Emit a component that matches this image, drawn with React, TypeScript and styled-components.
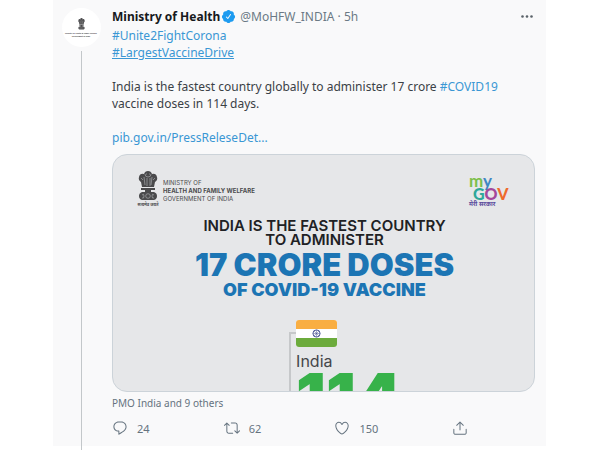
import React from "react";
import styled, { createGlobalStyle } from "styled-components";

const GlobalStyle = createGlobalStyle`
  * { box-sizing: border-box; }
  body {
    margin: 0;
    background: #fff;
    color: #3b4146;
    font: 12px/17px "Noto Sans", "Open Sans", sans-serif;
  }
`;

const Tweet = styled.article`
  display: grid;
  grid-template-columns: 56px minmax(0, 1fr);
  column-gap: 3px;
  margin: 0 54px 4px 53px;
  padding: 8px 11px 0 0;
  background: #f9f9fa;
`;

const Thread = styled.div`
  display: flex;
  flex-direction: column;
  align-items: center;
  margin-bottom: -4px;
  gap: 4px;
`;

const Avatar = styled.a`
  display: flex;
  flex-direction: column;
  align-items: center;
  justify-content: center;
  width: 39px;
  height: 39px;
  border-radius: 50%;
  background: #fff;
  overflow: hidden;
  text-decoration: none;
`;

const AvatarCaption = styled.span`
  margin-top: 2px;
  color: #333;
  font: 700 2px/3px Lato, sans-serif;
  text-align: center;
  white-space: nowrap;
`;

const ThreadLine = styled.div`
  flex: 1;
  width: 1px;
  background: #c3c7ca;
`;

const Header = styled.header`
  display: flex;
  align-items: center;
  height: 17px;
  margin-bottom: 2px;
`;

const Name = styled.a`
  color: #17191c;
  font-weight: 700;
  text-decoration: none;
`;

const Badge = styled.svg`
  width: 15px;
  height: 15px;
  margin: 0 4px 0 1px;
  fill: #1d9bf0;
`;

const Meta = styled.span`
  color: #6b7985;
  white-space: nowrap;
`;

const MoreButton = styled.button`
  display: flex;
  margin-left: auto;
  padding: 0;
  border: 0;
  background: none;
  color: #596168;
`;

const Body = styled.p`
  margin: 0 0 8px;
`;

const Link = styled.a<{ $underlined?: boolean }>`
  color: #3a97d4;
  text-decoration: ${(p) => (p.$underlined ? "underline" : "none")};
`;

const Poster = styled.section`
  aspect-ratio: 16 / 9;
  overflow: hidden;
  padding: 16px 26px 0 24px;
  border: 1px solid #ccd3d9;
  border-radius: 15px;
  background: #e6e7e9;
  color: #202124;
  font-family: Inter, "Liberation Sans", sans-serif;
`;

const PosterTop = styled.div`
  display: flex;
  justify-content: space-between;
  height: 48px;
`;

const Ministry = styled.div`
  display: flex;
  gap: 4px;
  color: #4b4b4d;
  font-size: 6px;
  line-height: 8px;
`;

const MinistryText = styled.div`
  padding-top: 8px;
`;

const EmblemMark = styled.div`
  display: flex;
  flex-direction: column;
  align-items: center;
  width: 22px;
`;

const Motto = styled.span<{ $color: string; $size: number }>`
  color: ${(p) => p.$color};
  font: 700 ${(p) => p.$size}px/8px "Noto Sans Devanagari", "Noto Sans", sans-serif;
  white-space: nowrap;
`;

const Logo = styled.div`
  display: flex;
  flex-direction: column;
  padding-top: 4px;
  width: 39px;
  font-family: Lato, sans-serif;
  font-weight: 700;
`;

const LogoTop = styled.span`
  font-size: 17px;
  line-height: 12px;
`;

const LogoBottom = styled.span`
  padding-left: 4px;
  font-size: 16px;
  font-weight: 900;
  line-height: 14px;
`;

const Tint = styled.span<{ $color: string }>`
  color: ${(p) => p.$color};
`;

const Headline = styled.div`
  padding-left: 4px;
  text-align: center;
`;

const Lead = styled.div`
  font-size: 15px;
  font-weight: 600;
  line-height: 14px;
`;

const Big = styled.div`
  margin-top: 2px;
  color: #1c75b4;
  font-size: 31px;
  font-weight: 900;
  line-height: 31px;
`;

const Sub = styled.div`
  color: #1c75b4;
  font-size: 18px;
  font-weight: 900;
  line-height: 20px;
`;

const Stat = styled.div`
  display: grid;
  grid-template-columns: 7px max-content;
  margin: 20px 0 0 41%;
`;

const Bracket = styled.div`
  margin-top: 12px;
  border: solid #c6c8ca;
  border-width: 2px 0 0 2px;
`;

const Flag = styled.svg`
  display: block;
  width: 41px;
  height: 27px;
`;

const Country = styled.div`
  padding-top: 5px;
  font-size: 16px;
  line-height: 18px;
  color: #45464a;
`;

const Days = styled.div`
  height: 40px;
  color: #37b24a;
  font-size: 66px;
  font-weight: 900;
  line-height: 54px;
`;

const Tagged = styled.a`
  display: block;
  margin-top: 3px;
  color: #65737f;
  font-size: 10px;
  line-height: 16px;
  text-decoration: none;
`;

const Actions = styled.footer`
  display: grid;
  grid-template-columns: 112fr 111fr 118fr 83fr;
  padding: 9px 0;
`;

const Action = styled.button`
  display: flex;
  align-items: center;
  justify-self: start;
  gap: 9px;
  padding: 0;
  border: 0;
  background: none;
  color: #65737f;
  font: 11px/17px "Noto Sans", sans-serif;
`;

const Icon = styled.svg`
  width: 16px;
  height: 16px;
  fill: currentColor;
`;

const icons = {
  reply:
    "M14.046 2.242l-4.148-.01h-.002c-4.374 0-7.8 3.427-7.8 7.802 0 4.098 3.186 7.206 7.465 7.37v3.828c0 .108.044.286.12.403.142.225.384.347.632.347.138 0 .277-.038.402-.118.264-.168 6.473-4.14 8.088-5.506 1.902-1.61 3.04-3.97 3.043-6.312v-.017c-.006-4.367-3.43-7.787-7.8-7.788zm3.787 12.972c-1.134.96-4.862 3.405-6.772 4.643V16.67c0-.414-.335-.75-.75-.75h-.396c-3.66 0-6.318-2.476-6.318-5.886 0-3.534 2.768-6.302 6.3-6.302l4.147.01h.002c3.532 0 6.3 2.766 6.302 6.296-.003 1.91-.942 3.844-2.514 5.176z",
  retweet:
    "M23.77 15.67c-.292-.293-.767-.293-1.06 0l-2.22 2.22V7.65c0-2.068-1.683-3.75-3.75-3.75h-5.85c-.414 0-.75.336-.75.75s.336.75.75.75h5.85c1.24 0 2.25 1.01 2.25 2.25v10.24l-2.22-2.22c-.293-.293-.768-.293-1.06 0s-.294.768 0 1.06l3.5 3.5c.145.147.337.22.53.22s.383-.072.53-.22l3.5-3.5c.294-.292.294-.767 0-1.06zm-10.66 3.28H7.26c-1.24 0-2.25-1.01-2.25-2.25V6.46l2.22 2.22c.148.147.34.22.532.22s.384-.073.53-.22c.293-.293.293-.768 0-1.06l-3.5-3.5c-.293-.294-.768-.294-1.06 0l-3.5 3.5c-.294.292-.294.767 0 1.06s.767.293 1.06 0l2.22-2.22V16.7c0 2.068 1.683 3.75 3.75 3.75h5.85c.414 0 .75-.336.75-.75s-.337-.75-.75-.75z",
  like: "M12 21.638h-.014C9.403 21.59 1.95 14.856 1.95 8.478c0-3.064 2.525-5.754 5.403-5.754 2.29 0 3.83 1.58 4.646 2.73.814-1.148 2.354-2.73 4.645-2.73 2.88 0 5.404 2.69 5.404 5.755 0 6.376-7.454 13.11-10.037 13.157H12zM7.354 4.225c-2.08 0-3.903 1.988-3.903 4.255 0 5.74 7.034 11.596 8.55 11.658 1.518-.062 8.55-5.917 8.55-11.658 0-2.267-1.823-4.255-3.903-4.255-2.528 0-3.94 2.936-3.952 2.965-.23.562-1.156.562-1.387 0-.014-.03-1.425-2.965-3.954-2.965z",
  share:
    "M17.53 7.47l-5-5c-.293-.293-.768-.293-1.06 0l-5 5c-.294.293-.294.768 0 1.06s.767.294 1.06 0l3.72-3.72V15c0 .414.336.75.75.75s.75-.336.75-.75V4.81l3.72 3.72c.146.147.338.22.53.22s.384-.072.53-.22c.293-.293.293-.767 0-1.06zM19.708 21.944H4.292C3.028 21.944 2 20.916 2 19.652V14c0-.414.336-.75.75-.75s.75.336.75.75v5.652c0 .437.355.792.792.792h15.416c.437 0 .792-.355.792-.792V14c0-.414.336-.75.75-.75s.75.336.75.75v5.652c0 1.264-1.028 2.292-2.292 2.292z",
};

const actions = [
  { label: "Reply", path: icons.reply, count: "24" },
  { label: "Retweet", path: icons.retweet, count: "62" },
  { label: "Like", path: icons.like, count: "150" },
  { label: "Share", path: icons.share, count: "" },
];

function Emblem({ width, height }: { width: number; height: number }) {
  return (
    <svg width={width} height={height} viewBox="0 0 20 30" preserveAspectRatio="none" aria-hidden="true">
      <g fill="#4a4a4c">
        <path d="M6 3Q7 0 10 0t4 3q4-1 5 3 1 3-2 5l-1 5H4L3 11Q0 9 1 6 2 2 6 3z" />
        <path d="M3 17h14v2H3zM7 19h6v2H7zM4 21q-3 1-3 4t3 4h12q3-1 3-4t-3-4z" />
      </g>
      <g fill="none" stroke="#b4b5b8" strokeWidth="0.6">
        <path d="M7 3q0 3 3 3t3-3M8 3h1M11 3h1M9 7v8M12 7v8M6 6l1 8M14 6l-1 8M3 7l2 2M17 7l-2 2" />
        <circle cx="10" cy="25" r="2.3" />
        <path d="M4 24q2-2 2 1t-2 2M16 24q-2-2-2 1t2 2" />
      </g>
    </svg>
  );
}

export default function App() {
  return (
    <>
      <GlobalStyle />
      <Tweet>
        <Thread>
          <Avatar href="#profile" aria-label="Ministry of Health profile">
            <Emblem width={7} height={12} />
            <AvatarCaption>
              Ministry of Health &amp; Family Welfare
              <br />
              Government of India
            </AvatarCaption>
          </Avatar>
          <ThreadLine />
        </Thread>
        <div>
          <Header>
            <Name href="#profile">Ministry of Health</Name>
            <Badge viewBox="0 0 24 24" role="img" aria-label="Verified">
              <path d="M22.5 12.5c0-1.58-.875-2.95-2.148-3.6.154-.435.238-.905.238-1.4 0-2.21-1.71-3.998-3.818-3.998-.47 0-.92.084-1.336.25C14.818 2.415 13.51 1.5 12 1.5s-2.816.917-3.437 2.25c-.415-.165-.866-.25-1.336-.25-2.11 0-3.818 1.79-3.818 4 0 .494.083.964.237 1.4-1.272.65-2.147 2.018-2.147 3.6 0 1.495.782 2.798 1.942 3.486-.02.17-.032.34-.032.514 0 2.21 1.708 4 3.818 4 .47 0 .92-.086 1.335-.25.62 1.334 1.926 2.25 3.437 2.25 1.512 0 2.818-.916 3.437-2.25.415.163.865.248 1.336.248 2.11 0 3.818-1.79 3.818-4 0-.174-.012-.344-.033-.513 1.158-.687 1.943-1.99 1.943-3.484zm-6.616-3.334l-4.334 6.5c-.145.217-.382.334-.625.334-.143 0-.288-.04-.416-.126l-.115-.094-2.415-2.415c-.293-.293-.293-.768 0-1.06s.768-.294 1.06 0l1.77 1.767 3.825-5.74c.23-.345.696-.436 1.04-.207.346.23.44.696.21 1.04z" />
            </Badge>
            <Meta>@MoHFW_INDIA · 5h</Meta>
            <MoreButton aria-label="More">
              <Icon viewBox="0 0 16 16">
                <circle cx="3.5" cy="7.5" r="1.3" />
                <circle cx="8" cy="7.5" r="1.3" />
                <circle cx="12.5" cy="7.5" r="1.3" />
              </Icon>
            </MoreButton>
          </Header>
          <Body>
            <Link href="#unite">#Unite2FightCorona</Link>
            <br />
            <Link href="#drive" $underlined>
              #LargestVaccineDrive
            </Link>
            <br />
            <br />
            India is the fastest country globally to administer 17 crore <Link href="#covid">#COVID19</Link>
            <br />
            vaccine doses in 114 days.
            <br />
            <br />
            <Link href="#pib">pib.gov.in/PressReleseDet...</Link>
          </Body>
          <Poster>
            <PosterTop>
              <Ministry>
                <EmblemMark>
                  <Emblem width={20} height={30} />
                  <Motto $color="#4b4b4d" $size={4}>
                    सत्यमेव जयते
                  </Motto>
                </EmblemMark>
                <MinistryText>
                  MINISTRY OF
                  <br />
                  <strong>HEALTH AND FAMILY WELFARE</strong>
                  <br />
                  GOVERNMENT OF INDIA
                </MinistryText>
              </Ministry>
              <Logo>
                <LogoTop>
                  <Tint $color="#7cbf4b">m</Tint>
                  <Tint $color="#3f86c4">y</Tint>
                </LogoTop>
                <LogoBottom>
                  <Tint $color="#2fa89a">G</Tint>
                  <Tint $color="#a3489b">O</Tint>
                  <Tint $color="#ee6a2c">V</Tint>
                </LogoBottom>
                <Motto $color="#5a4a9c" $size={6}>
                  मेरी सरकार
                </Motto>
              </Logo>
            </PosterTop>
            <Headline>
              <Lead>
                INDIA IS THE FASTEST COUNTRY
                <br />
                TO ADMINISTER
              </Lead>
              <Big>17 CRORE DOSES</Big>
              <Sub>OF COVID-19 VACCINE</Sub>
            </Headline>
            <Stat>
              <Bracket />
              <div>
                <Flag viewBox="0 0 41 27" role="img" aria-label="Flag of India">
                  <clipPath id="flag">
                    <rect width="41" height="27" rx="3" />
                  </clipPath>
                  <g clipPath="url(#flag)">
                    <rect width="41" height="27" fill="#fff" />
                    <rect width="41" height="9" fill="#f9ae42" />
                    <rect y="18" width="41" height="9" fill="#6cab3c" />
                  </g>
                  <g fill="none" stroke="#4a5595">
                    <circle cx="20.5" cy="13.5" r="3.6" />
                    <path strokeWidth="0.5" d="M17 13.5h7M20.5 10v7M18 11l5 5M23 11l-5 5" />
                  </g>
                </Flag>
                <Country>India</Country>
                <Days>114</Days>
              </div>
            </Stat>
          </Poster>
          <Tagged href="#tagged">PMO India and 9 others</Tagged>
          <Actions>
            {actions.map((a) => (
              <Action key={a.label} aria-label={a.label}>
                <Icon viewBox="0 0 24 24">
                  <path d={a.path} />
                </Icon>
                {a.count}
              </Action>
            ))}
          </Actions>
        </div>
      </Tweet>
    </>
  );
}
